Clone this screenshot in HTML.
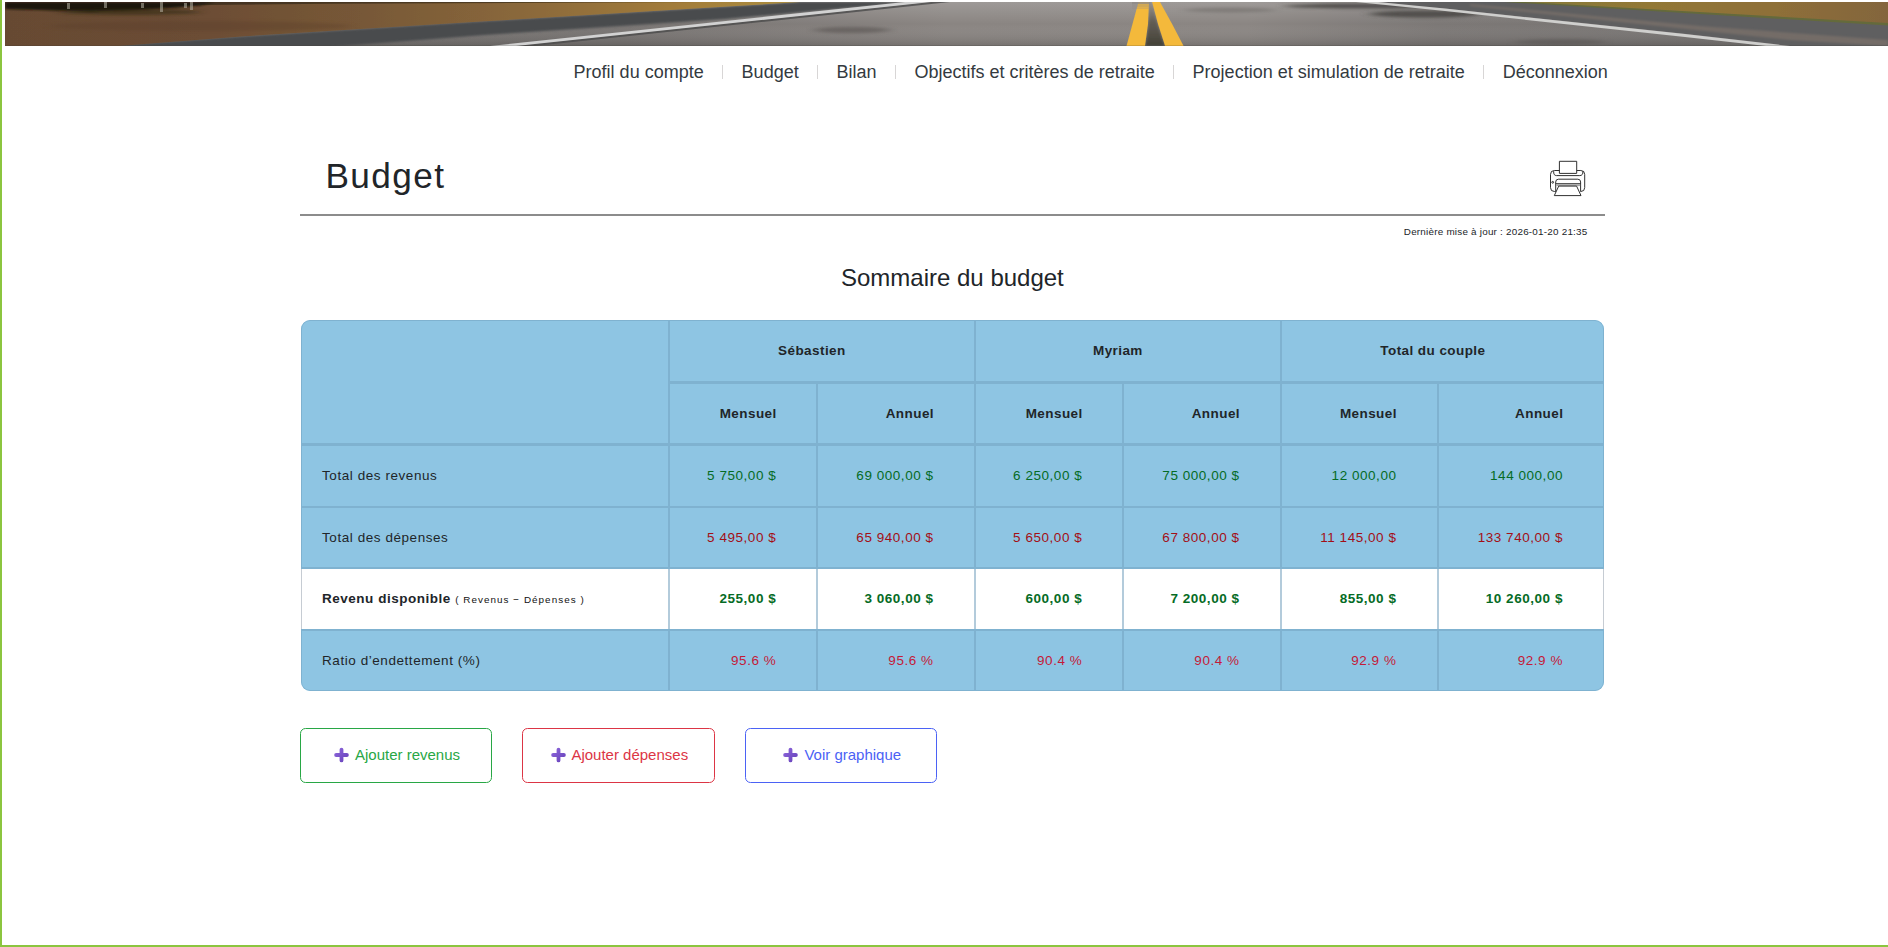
<!DOCTYPE html>
<html lang="fr">
<head>
<meta charset="utf-8">
<title>Budget</title>
<style>
html,body{margin:0;padding:0;}
body{width:1888px;height:947px;overflow:hidden;position:relative;background:#fff;
  font-family:"Liberation Sans",sans-serif;color:#212529;}
.edgeL{position:absolute;left:0;top:0;width:2px;height:947px;background:#8bc53f;}
.edgeB{position:absolute;left:0;top:945px;width:1888px;height:2px;background:#8bc53f;}
.banner{position:absolute;left:5px;top:2px;width:1883px;height:44px;overflow:hidden;}
.nav{position:absolute;left:554.65px;top:59px;height:26px;white-space:nowrap;font-size:18px;line-height:26px;color:#343a40;}
.nav span{display:inline-block;padding:0 18.97px;position:relative;}
.nav span+span:before{content:"";position:absolute;left:-1.1px;top:5.5px;width:1.5px;height:14.3px;background:#d8d6d6;}
.tbl{position:absolute;background:#8ec5e3;border-radius:9px;overflow:hidden;}
.tbl .ln{position:absolute;background:#7fb2d0;}
.tbl .frame{position:absolute;left:0;top:0;right:0;bottom:0;border:1px solid #7fb2d0;border-radius:9px;box-sizing:border-box;}
.btn{position:absolute;top:728px;height:55px;box-sizing:border-box;border:1px solid;border-radius:5px;background:#fff;}
.btn .t{position:absolute;top:17px;font-size:15.4px;line-height:20px;white-space:nowrap;}
.btn svg{position:absolute;top:18.5px;}
</style>
</head>
<body>
<div class="edgeL"></div><div class="edgeB"></div>

<div class="banner">
<svg width="1883" height="44" viewBox="5 2 1883 44" preserveAspectRatio="none">
<defs>
<linearGradient id="grassL" gradientUnits="userSpaceOnUse" x1="5" x2="800" y1="0" y2="0">
<stop offset="0" stop-color="#664a33"/><stop offset="0.25" stop-color="#6c4d34"/><stop offset="0.45" stop-color="#775837"/><stop offset="0.65" stop-color="#8a683b"/><stop offset="0.85" stop-color="#a37d3a"/><stop offset="1" stop-color="#ac8e3e"/>
</linearGradient>
<linearGradient id="road" gradientUnits="userSpaceOnUse" x1="5" x2="1888" y1="0" y2="0">
<stop offset="0" stop-color="#767371"/><stop offset="0.33" stop-color="#787472"/><stop offset="0.5" stop-color="#8a8582"/><stop offset="0.66" stop-color="#8b8683"/><stop offset="0.76" stop-color="#7c7876"/><stop offset="1" stop-color="#757270"/>
</linearGradient>
<linearGradient id="vshade" x1="0" x2="0" y1="0" y2="1">
<stop offset="0" stop-color="#fff" stop-opacity="0.17"/><stop offset="0.5" stop-color="#fff" stop-opacity="0"/><stop offset="1" stop-color="#000" stop-opacity="0.15"/>
</linearGradient>
<linearGradient id="grassR" gradientUnits="userSpaceOnUse" x1="1519" x2="1888" y1="0" y2="0">
<stop offset="0" stop-color="#857a38"/><stop offset="0.35" stop-color="#927836"/><stop offset="0.7" stop-color="#8e6f39"/><stop offset="1" stop-color="#83653c"/>
</linearGradient>
<linearGradient id="gap" x1="0" x2="0" y1="0" y2="1">
<stop offset="0" stop-color="#7a7670" stop-opacity="0.3"/><stop offset="0.45" stop-color="#5a564c" stop-opacity="0.85"/><stop offset="1" stop-color="#423f36"/>
</linearGradient>
<filter id="b1" x="-5%" y="-20%" width="110%" height="140%"><feGaussianBlur stdDeviation="0.6"/></filter>
<filter id="b2" x="-5%" y="-40%" width="110%" height="180%"><feGaussianBlur stdDeviation="1.6 1.1"/></filter>
<filter id="b3" x="-10%" y="-80%" width="120%" height="260%"><feGaussianBlur stdDeviation="6 1.4"/></filter>
</defs>
<rect x="5" y="2" width="1883" height="44" fill="url(#road)"/>
<rect x="5" y="2" width="1883" height="44" fill="url(#vshade)"/>
<polygon points="100,47 245,36.3 485,21.3 740,5.8 800,2 915,2 725,19 485,35 330,47" fill="#484c4e" filter="url(#b2)"/>
<polygon points="5,2 800,2 740,5.8 485,21.3 245,36.3 119,46 5,46" fill="url(#grassL)" filter="url(#b1)"/>
<polygon points="5,2 215,2 200,5.5 170,8 140,10 90,11.5 40,10 5,9" fill="#1a1509" filter="url(#b2)"/>
<polygon points="200,2 700,2 330,3.8 200,5" fill="#2a2212" opacity="0.6" filter="url(#b1)"/>
<ellipse cx="130" cy="12" rx="70" ry="3" fill="#2c2510" opacity="0.55" filter="url(#b3)"/>
<ellipse cx="200" cy="26" rx="150" ry="5" fill="#5a3c2a" opacity="0.35" filter="url(#b3)"/>
<rect x="67" y="3" width="3" height="6" fill="#b8b4a6" opacity="0.55" filter="url(#b1)"/>
<rect x="104" y="2" width="3" height="6" fill="#b8b4a6" opacity="0.55" filter="url(#b1)"/>
<rect x="141" y="3" width="3" height="5" fill="#b8b4a6" opacity="0.55" filter="url(#b1)"/>
<rect x="160" y="2" width="3" height="10" fill="#b8b4a6" opacity="0.55" filter="url(#b1)"/>
<rect x="184" y="3" width="3" height="5" fill="#b8b4a6" opacity="0.55" filter="url(#b1)"/>
<rect x="190" y="2" width="3" height="8" fill="#b8b4a6" opacity="0.55" filter="url(#b1)"/>
<polygon points="512,46 927,2 950,2 535,46" fill="#4b4b4c" opacity="0.8" filter="url(#b1)"/>
<polygon points="490,46 905,2 931,2 516,46" fill="#d2d2d2" filter="url(#b1)"/>
<ellipse cx="852" cy="30" rx="38" ry="3.2" fill="#55504e" opacity="0.55" filter="url(#b3)"/>
<ellipse cx="1370" cy="6" rx="85" ry="2.6" fill="#45423f" opacity="0.8" filter="url(#b3)"/>
<ellipse cx="1425" cy="14" rx="55" ry="3.6" fill="#45423f" opacity="0.8" filter="url(#b3)"/>
<ellipse cx="1560" cy="42" rx="45" ry="3" fill="#55514f" opacity="0.5" filter="url(#b3)"/>
<ellipse cx="1230" cy="10" rx="45" ry="2.5" fill="#57534f" opacity="0.35" filter="url(#b3)"/>
<polygon points="1378,2 1888,2 1888,46 1792,46 1685,33.8 1445,8.4" fill="#5f5e60" filter="url(#b1)"/>
<polygon points="1470,6 1790,40 1888,46 1888,40 1700,26 1470,4" fill="#86786e" opacity="0.55" filter="url(#b2)"/>
<polygon points="1505,2 1888,25.4 1888,22 1525,2" fill="#666c34" opacity="0.85" filter="url(#b1)"/>
<polygon points="1525,2 1888,2 1888,23" fill="url(#grassR)" filter="url(#b1)"/>
<polygon points="1356,2 1378,2 1445,8.6 1685,34.1 1790,46 1766,46 1685,36.9 1445,11.1" fill="#cfcfcd" filter="url(#b1)"/>
<polygon points="1149,2 1152.1,2 1158,24 1165.1,46 1145,46 1148,24" fill="url(#gap)" filter="url(#b2)"/>
<polygon points="1138.5,2 1149,2 1148,24 1145,46 1126.5,46 1132.5,24" fill="#f4b93a" filter="url(#b1)"/>
<polygon points="1152.1,2 1160,2 1172.1,24 1183.6,46 1165.1,46 1158,24" fill="#f4b93a" filter="url(#b1)"/>
<rect x="1132" y="2" width="18.5" height="2.4" fill="#8f8a87" opacity="0.8"/>
<rect x="1132" y="5.4" width="18" height="1.2" fill="#8f8a87" opacity="0.6"/>
<rect x="1132" y="7.6" width="18" height="0.9" fill="#8f8a87" opacity="0.5"/>
<rect x="5" y="45" width="1883" height="1" fill="#3a3633" opacity="0.18"/>
</svg>
</div>

<div class="nav"><span>Profil du compte</span><span>Budget</span><span>Bilan</span><span>Objectifs et critères de retraite</span><span>Projection et simulation de retraite</span><span>Déconnexion</span></div>

<!-- printer icon -->
<svg style="position:absolute;left:1545px;top:156px" width="46" height="46" viewBox="1545 156 46 46" fill="none" stroke="#262626" stroke-width="0.95" stroke-linejoin="round">
<path d="M1559.4 173.3V161.3H1576.7V173.3" fill="#fff"/>
<path d="M1559.4 170.5H1554.4Q1550.5 170.5 1550.5 174.4V187.6Q1550.5 191.5 1554.4 191.5H1555.7M1580.6 191.5H1580.8Q1584.7 191.5 1584.7 187.6V174.4Q1584.7 170.5 1580.8 170.5H1576.7"/>
<path d="M1559.4 173.4H1576.7M1553.7 171.2Q1553.3 175.6 1556.6 175.6H1579.8Q1583.1 175.6 1582.9 171.2"/>
<path d="M1555.7 191.6V182Q1555.7 179.2 1558.5 179.2H1577.8Q1580.6 179.2 1580.6 182V191.6"/>
<path d="M1555.7 183.7H1580.6"/>
<path d="M1556.2 184.2H1580.1V186.1H1556.2Z" fill="#a6a6a6" stroke="none"/>
<path d="M1558.7 186.1H1576.6L1581 195.6H1554.3Z" fill="#fff"/>
<circle cx="1552.7" cy="182.3" r="0.9"/>
</svg>

<div class="tbl" style="left:301px;top:320px;width:1303px;height:370.6px">
<div style="position:absolute;left:0;top:248.60000000000002px;width:100%;height:60.299999999999955px;background:#fff"></div>
<div class="ln" style="left:368px;right:0;top:61.00px;height:3.00px"></div>
<div class="ln" style="left:0px;right:0;top:123.00px;height:3.00px"></div>
<div class="ln" style="left:0px;right:0;top:185.70px;height:2.10px"></div>
<div class="ln" style="left:0px;right:0;top:246.80px;height:1.80px"></div>
<div class="ln" style="left:0px;right:0;top:308.70px;height:2.10px"></div>
<div class="ln" style="left:367px;width:2px;top:0px;bottom:0"></div>
<div style="position:absolute;left:367px;width:2px;top:248.60000000000002px;height:60.299999999999955px;background:#b3cbdb"></div>
<div class="ln" style="left:515px;width:2px;top:62px;bottom:0"></div>
<div style="position:absolute;left:515px;width:2px;top:248.60000000000002px;height:60.299999999999955px;background:#b3cbdb"></div>
<div class="ln" style="left:673px;width:2px;top:0px;bottom:0"></div>
<div style="position:absolute;left:673px;width:2px;top:248.60000000000002px;height:60.299999999999955px;background:#b3cbdb"></div>
<div class="ln" style="left:821px;width:2px;top:62px;bottom:0"></div>
<div style="position:absolute;left:821px;width:2px;top:248.60000000000002px;height:60.299999999999955px;background:#b3cbdb"></div>
<div class="ln" style="left:979px;width:2px;top:0px;bottom:0"></div>
<div style="position:absolute;left:979px;width:2px;top:248.60000000000002px;height:60.299999999999955px;background:#b3cbdb"></div>
<div class="ln" style="left:1136px;width:2px;top:62px;bottom:0"></div>
<div style="position:absolute;left:1136px;width:2px;top:248.60000000000002px;height:60.299999999999955px;background:#b3cbdb"></div>
<div class="frame"></div>
<div style="position:absolute;left:0;width:1px;top:248.79999999999995px;height:59.90000000000009px;background:#c6ccd3"></div>
<div style="position:absolute;right:0;width:1px;top:248.79999999999995px;height:59.90000000000009px;background:#c6ccd3"></div>
</div>
<div style="position:absolute;top:341.80px;font-size:13.5px;line-height:18px;color:#212529;white-space:nowrap;font-weight:700;letter-spacing:0.43px;left:611.90px;width:400px;text-align:center;">Sébastien</div>
<div style="position:absolute;top:341.80px;font-size:13.5px;line-height:18px;color:#212529;white-space:nowrap;font-weight:700;letter-spacing:0.43px;left:917.90px;width:400px;text-align:center;">Myriam</div>
<div style="position:absolute;top:341.80px;font-size:13.5px;line-height:18px;color:#212529;white-space:nowrap;font-weight:700;letter-spacing:0.43px;left:1232.90px;width:400px;text-align:center;">Total du couple</div>
<div style="position:absolute;top:404.80px;font-size:13.5px;line-height:18px;color:#212529;white-space:nowrap;font-weight:700;letter-spacing:0.43px;right:1111.30px;">Mensuel</div>
<div style="position:absolute;top:404.80px;font-size:13.5px;line-height:18px;color:#212529;white-space:nowrap;font-weight:700;letter-spacing:0.43px;right:954.00px;">Annuel</div>
<div style="position:absolute;top:404.80px;font-size:13.5px;line-height:18px;color:#212529;white-space:nowrap;font-weight:700;letter-spacing:0.43px;right:805.30px;">Mensuel</div>
<div style="position:absolute;top:404.80px;font-size:13.5px;line-height:18px;color:#212529;white-space:nowrap;font-weight:700;letter-spacing:0.43px;right:648.00px;">Annuel</div>
<div style="position:absolute;top:404.80px;font-size:13.5px;line-height:18px;color:#212529;white-space:nowrap;font-weight:700;letter-spacing:0.43px;right:491.10px;">Mensuel</div>
<div style="position:absolute;top:404.80px;font-size:13.5px;line-height:18px;color:#212529;white-space:nowrap;font-weight:700;letter-spacing:0.43px;right:324.60px;">Annuel</div>
<div style="position:absolute;top:466.80px;font-size:13.5px;line-height:18px;color:#212529;white-space:nowrap;letter-spacing:0.56px;left:322.00px;">Total des revenus</div>
<div style="position:absolute;top:466.80px;font-size:13.5px;line-height:18px;color:#056b25;white-space:nowrap;letter-spacing:0.54px;right:1111.70px;">5&nbsp;750,00&nbsp;$</div>
<div style="position:absolute;top:466.80px;font-size:13.5px;line-height:18px;color:#056b25;white-space:nowrap;letter-spacing:0.54px;right:954.40px;">69&nbsp;000,00&nbsp;$</div>
<div style="position:absolute;top:466.80px;font-size:13.5px;line-height:18px;color:#056b25;white-space:nowrap;letter-spacing:0.54px;right:805.70px;">6&nbsp;250,00&nbsp;$</div>
<div style="position:absolute;top:466.80px;font-size:13.5px;line-height:18px;color:#056b25;white-space:nowrap;letter-spacing:0.54px;right:648.40px;">75&nbsp;000,00&nbsp;$</div>
<div style="position:absolute;top:466.80px;font-size:13.5px;line-height:18px;color:#056b25;white-space:nowrap;letter-spacing:0.54px;right:491.50px;">12&nbsp;000,00</div>
<div style="position:absolute;top:466.80px;font-size:13.5px;line-height:18px;color:#056b25;white-space:nowrap;letter-spacing:0.54px;right:325.00px;">144&nbsp;000,00</div>
<div style="position:absolute;top:528.80px;font-size:13.5px;line-height:18px;color:#212529;white-space:nowrap;letter-spacing:0.56px;left:322.00px;">Total des dépenses</div>
<div style="position:absolute;top:528.80px;font-size:13.5px;line-height:18px;color:#a30f16;white-space:nowrap;letter-spacing:0.54px;right:1111.70px;">5&nbsp;495,00&nbsp;$</div>
<div style="position:absolute;top:528.80px;font-size:13.5px;line-height:18px;color:#a30f16;white-space:nowrap;letter-spacing:0.54px;right:954.40px;">65&nbsp;940,00&nbsp;$</div>
<div style="position:absolute;top:528.80px;font-size:13.5px;line-height:18px;color:#a30f16;white-space:nowrap;letter-spacing:0.54px;right:805.70px;">5&nbsp;650,00&nbsp;$</div>
<div style="position:absolute;top:528.80px;font-size:13.5px;line-height:18px;color:#a30f16;white-space:nowrap;letter-spacing:0.54px;right:648.40px;">67&nbsp;800,00&nbsp;$</div>
<div style="position:absolute;top:528.80px;font-size:13.5px;line-height:18px;color:#a30f16;white-space:nowrap;letter-spacing:0.54px;right:491.50px;">11&nbsp;145,00&nbsp;$</div>
<div style="position:absolute;top:528.80px;font-size:13.5px;line-height:18px;color:#a30f16;white-space:nowrap;letter-spacing:0.54px;right:325.00px;">133&nbsp;740,00&nbsp;$</div>
<div style="position:absolute;top:589.80px;font-size:13.5px;line-height:18px;color:#212529;white-space:nowrap;font-weight:700;letter-spacing:0.52px;left:322.00px;">Revenu disponible <span style="font-weight:400;font-size:9.9px;letter-spacing:1.04px;color:#111">( Revenus − Dépenses )</span></div>
<div style="position:absolute;top:589.80px;font-size:13.5px;line-height:18px;color:#056b25;white-space:nowrap;font-weight:700;letter-spacing:0.54px;right:1111.70px;">255,00&nbsp;$</div>
<div style="position:absolute;top:589.80px;font-size:13.5px;line-height:18px;color:#056b25;white-space:nowrap;font-weight:700;letter-spacing:0.54px;right:954.40px;">3&nbsp;060,00&nbsp;$</div>
<div style="position:absolute;top:589.80px;font-size:13.5px;line-height:18px;color:#056b25;white-space:nowrap;font-weight:700;letter-spacing:0.54px;right:805.70px;">600,00&nbsp;$</div>
<div style="position:absolute;top:589.80px;font-size:13.5px;line-height:18px;color:#056b25;white-space:nowrap;font-weight:700;letter-spacing:0.54px;right:648.40px;">7&nbsp;200,00&nbsp;$</div>
<div style="position:absolute;top:589.80px;font-size:13.5px;line-height:18px;color:#056b25;white-space:nowrap;font-weight:700;letter-spacing:0.54px;right:491.50px;">855,00&nbsp;$</div>
<div style="position:absolute;top:589.80px;font-size:13.5px;line-height:18px;color:#056b25;white-space:nowrap;font-weight:700;letter-spacing:0.54px;right:325.00px;">10&nbsp;260,00&nbsp;$</div>
<div style="position:absolute;top:651.80px;font-size:13.5px;line-height:18px;color:#212529;white-space:nowrap;letter-spacing:0.56px;left:322.00px;">Ratio d’endettement (%)</div>
<div style="position:absolute;top:651.80px;font-size:13.5px;line-height:18px;color:#c41a38;white-space:nowrap;letter-spacing:0.54px;right:1111.70px;">95.6&nbsp;%</div>
<div style="position:absolute;top:651.80px;font-size:13.5px;line-height:18px;color:#c41a38;white-space:nowrap;letter-spacing:0.54px;right:954.40px;">95.6&nbsp;%</div>
<div style="position:absolute;top:651.80px;font-size:13.5px;line-height:18px;color:#c41a38;white-space:nowrap;letter-spacing:0.54px;right:805.70px;">90.4&nbsp;%</div>
<div style="position:absolute;top:651.80px;font-size:13.5px;line-height:18px;color:#c41a38;white-space:nowrap;letter-spacing:0.54px;right:648.40px;">90.4&nbsp;%</div>
<div style="position:absolute;top:651.80px;font-size:13.5px;line-height:18px;color:#c41a38;white-space:nowrap;letter-spacing:0.54px;right:491.50px;">92.9&nbsp;%</div>
<div style="position:absolute;top:651.80px;font-size:13.5px;line-height:18px;color:#c41a38;white-space:nowrap;letter-spacing:0.54px;right:325.00px;">92.9&nbsp;%</div>
<div style="position:absolute;top:152.80px;font-size:35.2px;line-height:46px;color:#212529;white-space:nowrap;letter-spacing:1.4px;left:325.40px;">Budget</div>
<div style="position:absolute;top:262.30px;font-size:24px;line-height:31px;color:#212529;white-space:nowrap;left:752.40px;width:400px;text-align:center;">Sommaire du budget</div>
<div style="position:absolute;top:225.30px;font-size:9.9px;line-height:13px;color:#212529;white-space:nowrap;letter-spacing:0.22px;left:1403.80px;">Dernière mise à jour : 2026-01-20 21:35</div>
<div style="position:absolute;left:300px;top:214px;width:1305px;height:2px;background:#8c8c8c"></div>

<div style="position:absolute;left:300.1px;top:727.9px;width:191.9px;height:54.8px;box-sizing:border-box;border:1px solid #28a745;border-radius:5.5px"></div>
<svg style="position:absolute;left:332.2px;top:744.6px" width="19" height="20" viewBox="332.2 744.6 19 20"><defs><linearGradient id="pg334" x1="0" y1="0" x2="1" y2="1"><stop offset="0" stop-color="#8a63d8"/><stop offset="1" stop-color="#6a45bd"/></linearGradient></defs><path d="M341.7 749.2V760.0M336.3 754.6H347.09999999999997" stroke="url(#pg334)" stroke-width="3.8" stroke-linecap="round" fill="none"/></svg>
<div style="position:absolute;top:744.80px;font-size:15px;line-height:20px;color:#28a745;white-space:nowrap;left:355.00px;">Ajouter revenus</div>
<div style="position:absolute;left:522.2px;top:727.9px;width:192.6px;height:54.8px;box-sizing:border-box;border:1px solid #dc3545;border-radius:5.5px"></div>
<svg style="position:absolute;left:549.0px;top:744.6px" width="19" height="20" viewBox="549.0 744.6 19 20"><defs><linearGradient id="pg551" x1="0" y1="0" x2="1" y2="1"><stop offset="0" stop-color="#8a63d8"/><stop offset="1" stop-color="#6a45bd"/></linearGradient></defs><path d="M558.5 749.2V760.0M553.1 754.6H563.9" stroke="url(#pg551)" stroke-width="3.8" stroke-linecap="round" fill="none"/></svg>
<div style="position:absolute;top:744.80px;font-size:15px;line-height:20px;color:#dc3545;white-space:nowrap;left:571.40px;">Ajouter dépenses</div>
<div style="position:absolute;left:745.2px;top:727.9px;width:191.7px;height:54.8px;box-sizing:border-box;border:1px solid #4b62f5;border-radius:5.5px"></div>
<svg style="position:absolute;left:781.0px;top:744.6px" width="19" height="20" viewBox="781.0 744.6 19 20"><defs><linearGradient id="pg783" x1="0" y1="0" x2="1" y2="1"><stop offset="0" stop-color="#8a63d8"/><stop offset="1" stop-color="#6a45bd"/></linearGradient></defs><path d="M790.5 749.2V760.0M785.1 754.6H795.9" stroke="url(#pg783)" stroke-width="3.8" stroke-linecap="round" fill="none"/></svg>
<div style="position:absolute;top:744.80px;font-size:15px;line-height:20px;color:#4b62f5;white-space:nowrap;left:804.40px;">Voir graphique</div>
</body>
</html>
